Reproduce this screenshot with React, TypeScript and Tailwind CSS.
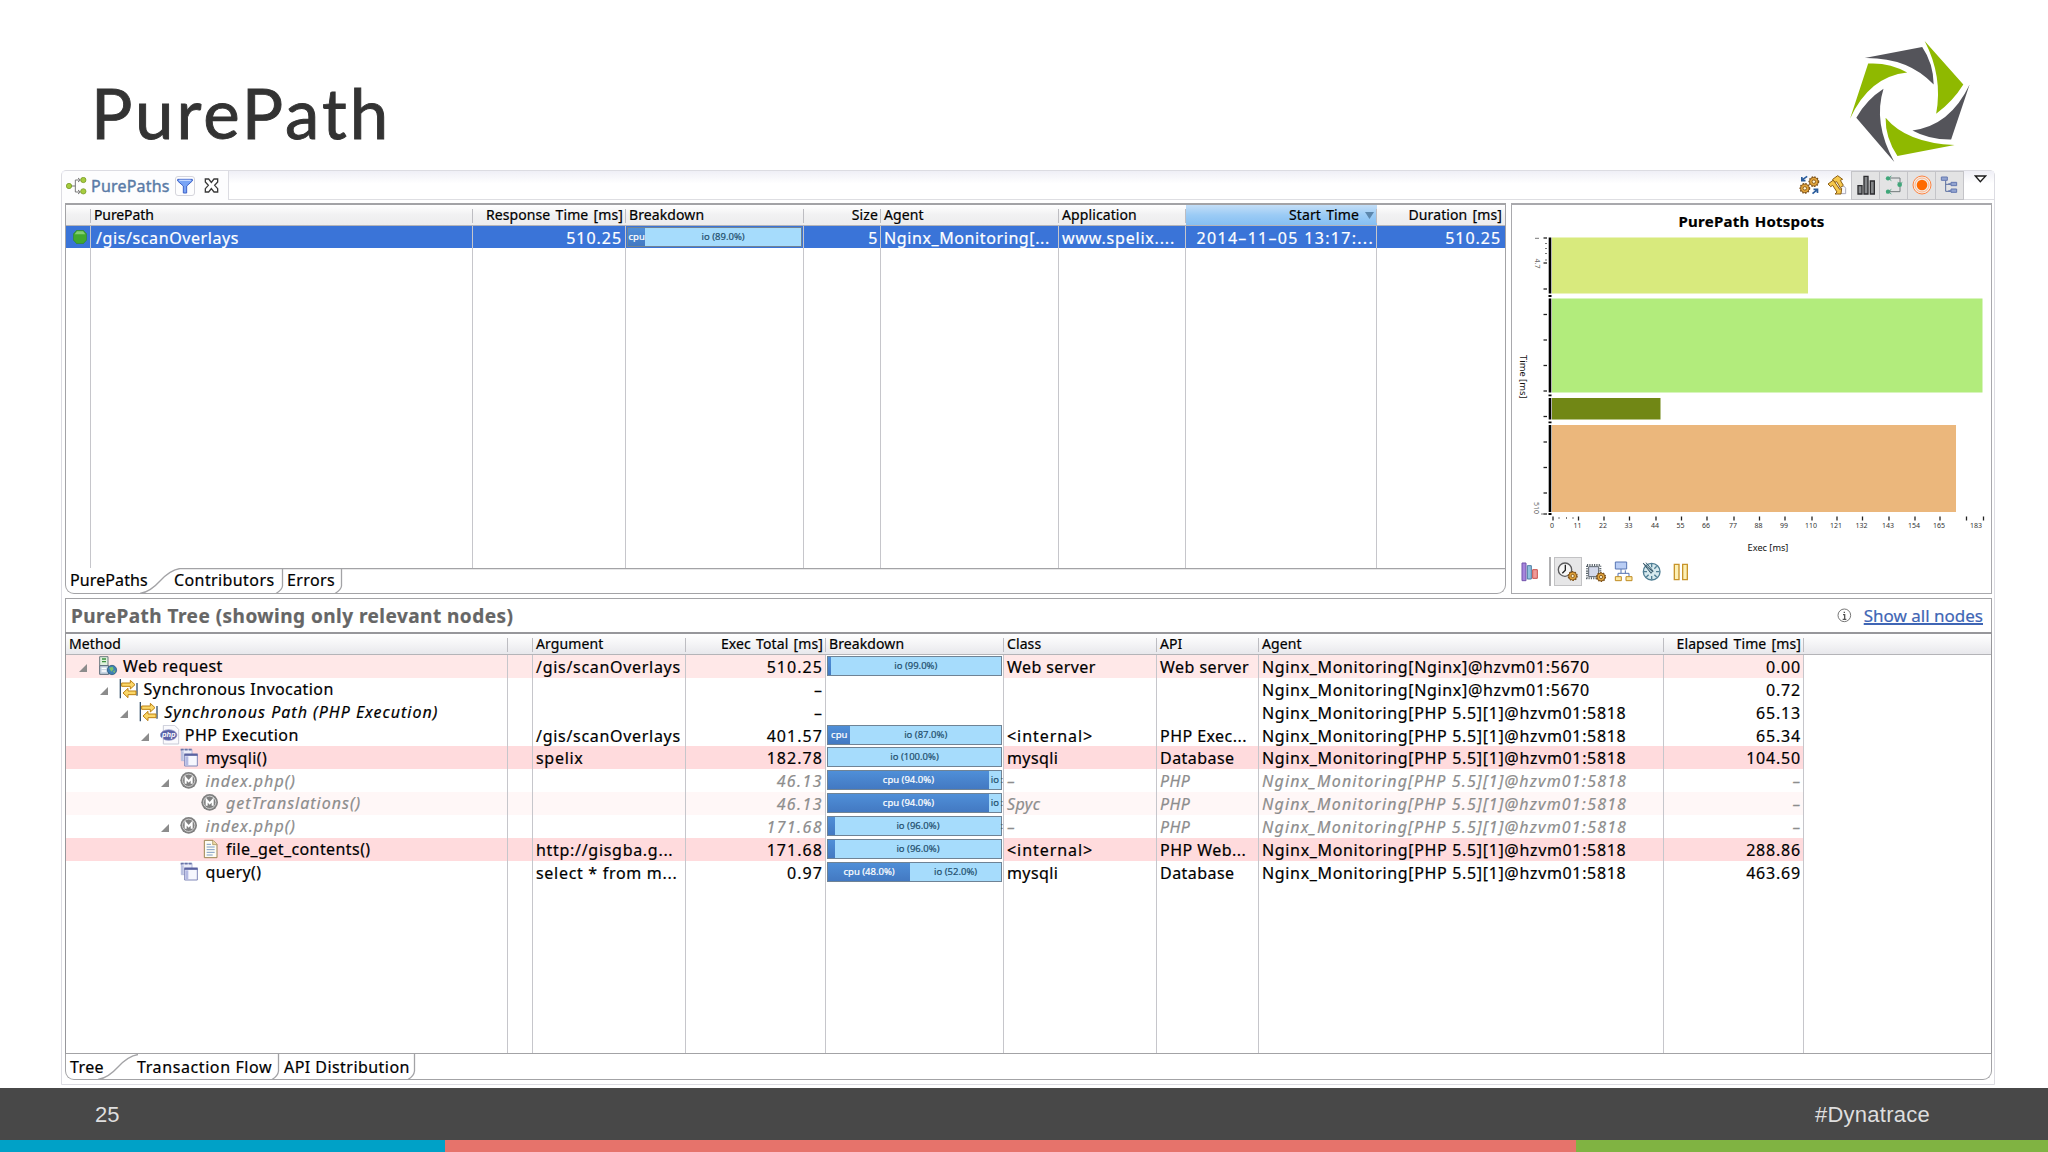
import React from 'react';
import clsx from 'clsx';

type IconName = 'server' | 'sync' | 'php' | 'windows' | 'method' | 'file';

interface Split {
  cpu: number;
  cpuLabel?: string;
  ioLabel?: string;
  overflow?: boolean;
}

interface TreeRow {
  level: number;
  icon: IconName;
  method: string;
  expandable?: boolean;
  italic?: boolean;
  muted?: boolean;
  bg?: string;
  argument?: string;
  exec: string;
  split?: Split;
  cls?: string;
  api?: string;
  agent: string;
  elapsed: string;
}

const NGINX = 'Nginx_Monitoring[Nginx]@hzvm01:5670';
const PHP = 'Nginx_Monitoring[PHP 5.5][1]@hzvm01:5818';

const rows: TreeRow[] = [
  { level: 0, icon: 'server', method: 'Web request', expandable: true, bg: 'bg-[#ffe8e8]', argument: '/gis/scanOverlays', exec: '510.25', split: { cpu: 1.5, ioLabel: 'io (99.0%)' }, cls: 'Web server', api: 'Web server', agent: NGINX, elapsed: '0.00' },
  { level: 1, icon: 'sync', method: 'Synchronous Invocation', expandable: true, exec: '–', agent: NGINX, elapsed: '0.72' },
  { level: 2, icon: 'sync', method: 'Synchronous Path (PHP Execution)', expandable: true, italic: true, exec: '–', agent: PHP, elapsed: '65.13' },
  { level: 3, icon: 'php', method: 'PHP Execution', expandable: true, argument: '/gis/scanOverlays', exec: '401.57', split: { cpu: 13, cpuLabel: 'cpu', ioLabel: 'io (87.0%)' }, cls: '<internal>', api: 'PHP Exec...', agent: PHP, elapsed: '65.34' },
  { level: 4, icon: 'windows', method: 'mysqli()', bg: 'bg-[#ffdbdd]', argument: 'spelix', exec: '182.78', split: { cpu: 0, ioLabel: 'io (100.0%)' }, cls: 'mysqli', api: 'Database', agent: PHP, elapsed: '104.50' },
  { level: 4, icon: 'method', method: 'index.php()', expandable: true, muted: true, exec: '46.13', split: { cpu: 93, cpuLabel: 'cpu (94.0%)', ioLabel: 'io', overflow: true }, cls: '–', api: 'PHP', agent: PHP, elapsed: '–' },
  { level: 5, icon: 'method', method: 'getTranslations()', muted: true, bg: 'bg-[#fff7f7]', exec: '46.13', split: { cpu: 93, cpuLabel: 'cpu (94.0%)', ioLabel: 'io', overflow: true }, cls: 'Spyc', api: 'PHP', agent: PHP, elapsed: '–' },
  { level: 4, icon: 'method', method: 'index.php()', expandable: true, muted: true, exec: '171.68', split: { cpu: 4, ioLabel: 'io (96.0%)', overflow: true }, cls: '–', api: 'PHP', agent: PHP, elapsed: '–' },
  { level: 5, icon: 'file', method: 'file_get_contents()', bg: 'bg-[#ffdbdd]', argument: 'http://gisgba.g...', exec: '171.68', split: { cpu: 4, ioLabel: 'io (96.0%)' }, cls: '<internal>', api: 'PHP Web...', agent: PHP, elapsed: '288.86' },
  { level: 4, icon: 'windows', method: 'query()', argument: 'select * from m...', exec: '0.97', split: { cpu: 47.5, cpuLabel: 'cpu (48.0%)', ioLabel: 'io (52.0%)' }, cls: 'mysqli', api: 'Database', agent: PHP, elapsed: '463.69' },
];

const TOP_COLS = 'grid grid-cols-[25px_382px_153px_178px_77px_178px_127px_191px_1fr]';
const TREE_COLS = 'grid grid-cols-[442px_25px_153px_140px_178px_153px_102px_405px_140px_1fr]';

const Logo = () => (
  <svg className="h-[123px] w-[122px]" viewBox="1000 60 350 370" preserveAspectRatio="none">
    <g fill="#8fb900">
      <path d="M1217 63L1328 194Q1298 245 1250 282Q1270 170 1217 63Z" />
      <path d="M1055 131Q1115 127 1167 158Q1058 170 1003 297Z" />
      <path d="M1105 294Q1165 370 1303 376L1139 409Q1104 355 1105 294Z" />
    </g>
    <g fill="#54545a">
      <path d="M1045 114L1210 81Q1242 130 1243 194Q1170 112 1045 114Z" />
      <path d="M1346 194L1293 359Q1230 360 1182 332Q1290 318 1346 194Z" />
      <path d="M1099 207Q1068 310 1130 427L1021 294Q1050 240 1099 207Z" />
    </g>
  </svg>
);

const Gear = ({ x, y, r }: { x: number; y: number; r: number }) => (
  <g>
    <circle cx={x} cy={y} r={r} fill="#e0a23a" stroke="#7c4f16" strokeWidth="2.5" />
    <circle cx={x} cy={y} r={r + 1.5} fill="none" stroke="#7c4f16" strokeWidth="3.5" strokeDasharray="4.5 4" />
    <circle cx={x} cy={y} r={r * 0.4} fill="#fff4d0" stroke="#7c4f16" strokeWidth="2.5" />
  </g>
);

const TreeIcon = ({ name }: { name: IconName }) => (
  <svg className="h-5 w-5 shrink-0" viewBox="0 0 60 60">
    {name === 'server' && (
      <>
        <path d="M5 2h25v27H5z" fill="#dff0dc" stroke="#6d7a80" strokeWidth="3" />
        <path d="M5 29h27v26H5z" fill="#c9d6e4" stroke="#5b6a78" strokeWidth="3" />
        <path d="M12 9h12M12 17h12" stroke="#3d9140" strokeWidth="4" />
        <path d="M11 37h14M11 45h14" stroke="#fff" strokeWidth="4" />
        <circle cx="42" cy="42" r="14" fill="#3f7fb5" stroke="#234d6e" strokeWidth="2" />
        <path d="M33 35l11-3 3 8-7 7zM45 46l7-3-3 9z" fill="#7cc36a" />
      </>
    )}
    {name === 'sync' && (
      <>
        <path d="M4 0v58M54 12v38" stroke="#34506c" strokeWidth="4" />
        <path d="M8 12h26V4l14 13-14 13v-8H8z" fill="#fbd768" stroke="#bd8213" strokeWidth="3" />
        <path d="M51 36H27v-8L12 42l15 14v-9h24z" fill="#fbd768" stroke="#bd8213" strokeWidth="3" />
      </>
    )}
    {name === 'php' && (
      <>
        <path d="M10 1h34l12 12v44H10z" fill="#fafafd" stroke="#c8cad6" strokeWidth="3" />
        <ellipse cx="26" cy="30" rx="25" ry="16" fill="#5a62a8" stroke="#9297c5" strokeWidth="2" />
        <text x="26" y="37" textAnchor="middle" fill="#fff" fontSize="22" fontWeight="bold" fontStyle="italic" fontFamily="Liberation Sans, sans-serif">php</text>
      </>
    )}
    {name === 'windows' && (
      <>
        <path d="M4 4h32v34H4z" fill="#eceef9" stroke="#b3badb" strokeWidth="3" />
        <path d="M2 5h34" stroke="#6874a8" strokeWidth="5" strokeDasharray="9 3" />
        <path d="M5 10h6v26H5z" fill="#b9c0e0" />
        <path d="M14 20h38v34H14z" fill="#f6f7fe" stroke="#8087b8" strokeWidth="3" />
        <path d="M13 20h40" stroke="#5a62a0" strokeWidth="7" />
        <path d="M16 25h9v28h-9z" fill="#b3b9e2" />
      </>
    )}
    {name === 'method' && (
      <>
        <circle cx="26" cy="28" r="25" fill="#808080" />
        <circle cx="26" cy="28" r="18.500" fill="none" stroke="#dcdcdc" strokeWidth="2.5" />
        <path d="M17 38V21l9 10 9-10v17" fill="none" stroke="#fff" strokeWidth="6" />
      </>
    )}
    {name === 'file' && (
      <>
        <path d="M10 4h26l12 12v40H10z" fill="#fdfdf5" stroke="#9c8450" strokeWidth="3" />
        <path d="M35 4v13h13" fill="#ecd9a2" stroke="#9c8450" strokeWidth="2" />
        <path d="M17 16h13M17 24h24M17 32h24M17 40h24M17 48h18" stroke="#7d9cc4" strokeWidth="3" />
      </>
    )}
  </svg>
);

const Breakdown = ({ split }: { split: Split }) => (
  <div className="relative -ml-[2px] flex h-[20px] w-[175px] border border-[#6f8395] text-[9.5px] leading-[18px] not-italic tracking-[0px]">
    <div className="overflow-hidden bg-gradient-to-b from-[#4f8fd8] to-[#4379c2] text-center text-white" style={{ width: `${split.cpu}%` }}>
      {split.cpuLabel}
    </div>
    <div className="flex-1 bg-[#a6dcfc] text-center text-[#24506e]">{split.ioLabel}</div>
    {split.overflow && <span className="absolute top-0 -right-[2px] text-[#555]">:</span>}
  </div>
);

const HeadCell = ({ children, right, last, className }: { children?: React.ReactNode; right?: boolean; last?: boolean; className?: string }) => (
  <div className={clsx('relative whitespace-nowrap px-[3px]', right && 'text-right [word-spacing:1.5px]', className)}>
    {children}
    {!last && <span className="absolute top-[4px] right-0 h-[14px] w-px bg-[#bdbdc2]" />}
  </div>
);

const Cell = ({ children, right, className }: { children?: React.ReactNode; right?: boolean; className?: string }) => (
  <div className={clsx('overflow-hidden border-r border-[#c6c6cb] whitespace-nowrap pl-[3px]', right && 'pr-[2px] text-right', className)}>
    {children}
  </div>
);

const ViewToolbar = () => (
  <div className="flex h-[28px] items-center">
    <svg className="mr-[7px] h-5 w-[21px]" viewBox="0 0 62 60">
      <Gear x={17} y={40} r={13} />
      <Gear x={44} y={20} r={13} />
      <path d="M24 4L10 14M8 6v11h11M40 56l12-10M55 54V43H43" fill="none" stroke="#2a5c9c" strokeWidth="5" />
    </svg>
    <svg className="mr-1 h-5 w-5" viewBox="0 0 60 60">
      <path d="M36 34h16l4 6v16H36z" fill="#f8f8fc" stroke="#aab" strokeWidth="3" />
      <path d="M17 13L32 2l15 11-7 3 9 15-9 7-11-18-7 3z" fill="#f6c84c" stroke="#8a5d14" strokeWidth="3" />
      <path d="M3 27l15-11 3 2 17 25 6-3-2 17H24l6-6-13-20-6 4z" fill="#f6c84c" stroke="#8a5d14" strokeWidth="3" />
    </svg>
    <div className="flex divide-x divide-[#c4c4c8] border border-[#c4c4c8] bg-[#e3e3e4]">
      <span className="flex h-[27px] w-[28px] items-center justify-center">
        <svg className="h-5 w-5" viewBox="0 0 60 60">
          <path d="M6 32h12v25H6zM24 4h12v53H24zM43 18h12v39H43z" fill="#85878a" stroke="#2d2d30" strokeWidth="4" />
        </svg>
      </span>
      <span className="flex h-[27px] w-[28px] items-center justify-center">
        <svg className="h-5 w-5" viewBox="0 0 60 60">
          <path d="M12 9h36v16M48 34v16H14" fill="none" stroke="#70797a" strokeWidth="3" />
          <g fill="#3fa879">
            <circle cx="12" cy="10" r="6.5" />
            <circle cx="47" cy="29" r="7" />
            <circle cx="12" cy="50" r="6.5" />
          </g>
          <path d="M22 3l-8 7 8 7M22 43l-8 7 8 7M41 22l7 6 7-6" fill="none" stroke="#4b9f80" strokeWidth="3" />
        </svg>
      </span>
      <span className="flex h-[27px] w-[28px] items-center justify-center">
        <svg className="h-5 w-5" viewBox="0 0 60 60">
          <circle cx="30" cy="30" r="27" fill="#f3ece6" stroke="#ff8340" strokeWidth="3" />
          <circle cx="30" cy="30" r="21" fill="none" stroke="#ff9a60" strokeWidth="2" />
          <circle cx="30" cy="30" r="16" fill="#ff6a00" />
        </svg>
      </span>
      <span className="flex h-[27px] w-[27px] items-center justify-center">
        <svg className="h-5 w-5" viewBox="0 0 60 60">
          <path d="M17 16v33h14M17 28h14" fill="none" stroke="#5b6f9e" strokeWidth="3" />
          <path d="M4 6h18v10H4zM33 22h17v10H33zM33 42h17v10H33z" fill="#93a4d0" stroke="#6478b0" strokeWidth="3" />
          <path d="M25 27h8M25 48h8" stroke="#6478b0" strokeWidth="4" />
        </svg>
      </span>
    </div>
    <svg className="mt-[-12px] mr-[7px] ml-[10px] h-[8px] w-[13px]" viewBox="0 0 39 24">
      <path d="M4 3h31L19 20z" fill="#fff" stroke="#1c1c1c" strokeWidth="4" />
    </svg>
  </div>
);

const xTicks = [
  [0, '0'], [25.5, '11'], [51, '22'], [76.5, '33'], [103, '44'], [128.5, '55'], [154, '66'], [181, '77'], [206.5, '88'],
  [232, '99'], [259, '110'], [284, '121'], [309.5, '132'], [336, '143'], [362, '154'], [387, '165'], [413.5, ''], [430.5, ''],
] as const;

const yTicks = [238, 263, 289, 314.5, 340, 365.5, 391, 416.5, 442, 467.5, 493, 514];

const HotspotChart = () => (
  <svg className="h-[325px] w-[478px]" viewBox="1512 230 478 325" fontFamily="Noto Sans, sans-serif">
    <rect x="1552" y="237.5" width="256" height="56" fill="#d8ea7d" />
    <rect x="1552" y="298.5" width="430.5" height="94" fill="#b2ec7c" />
    <rect x="1552" y="398" width="108.5" height="21.5" fill="#718715" />
    <rect x="1552" y="425" width="404" height="87" fill="#ebb77c" />
    <path d="M1550 237.5v56M1550 298.5v94M1550 398v21.5M1550 425v87" stroke="#000" strokeWidth="2.6" />
    <path d="M1548.5 296h3M1548.5 395.3h3M1548.5 422.3h3M1548.5 514h3" stroke="#000" strokeWidth="1.8" />
    {yTicks.map((y) => (
      <path key={y} d={`M1543.5 ${y}h3.5`} stroke="#222" strokeWidth="1.3" />
    ))}
    <path d="M1545 243.5h2M1545 248.5h2M1545 253.5h2M1545 260h2M1535 238.3h4M1541 514h3" stroke="#777" />
    {xTicks.map(([x, label]) => (
      <g key={x}>
        <path d={`M${1553 + x} 516.5v4`} stroke="#222" strokeWidth="1.3" />
        <text x={1552 + x} y="528" fontSize="7" fill="#333" textAnchor="middle">{label}</text>
      </g>
    ))}
    <path d="M1559 517v2M1566.5 517v2M1573 517v2" stroke="#777" />
    <text x="1976" y="528" fontSize="7" fill="#333" textAnchor="middle">183</text>
    <text x="1768" y="550.5" fontSize="9.2" fill="#111" textAnchor="middle">Exec [ms]</text>
    <text transform="translate(1520 355) rotate(90)" fontSize="9.4" fill="#111">Time [ms]</text>
    <text transform="translate(1535 258.5) rotate(90)" fontSize="7" fill="#666">4.7</text>
    <text transform="translate(1534 502) rotate(90)" fontSize="7" fill="#666">510</text>
  </svg>
);

const ChartToolbar = () => (
  <div className="mt-[2px] ml-[9px] flex h-[29px] items-center">
    <svg className="h-[20px] w-[18px]" viewBox="0 0 54 60">
      <path d="M3 3h12v53H3z" fill="#a585dc" stroke="#7253ac" strokeWidth="3" />
      <path d="M19 11h12v40H19z" fill="#8fc0de" stroke="#4d7ca4" strokeWidth="3" />
      <path d="M35 23h14v26H35z" fill="#f09a98" stroke="#c8524e" strokeWidth="3" />
    </svg>
    <span className="mr-[3px] ml-[10px] h-[29px] w-[2px] bg-[#b0b0b2]" />
    <span className="flex h-[29px] w-[28px] items-center justify-center border border-[#c2c2c4] bg-[#e6e6e7]">
      <svg className="h-[20px] w-[22px]" viewBox="0 0 64 60">
        <circle cx="23" cy="23" r="20" fill="#f6f6f6" stroke="#5a5a5c" strokeWidth="4" />
        <path d="M24 8v17l-9 9" fill="none" stroke="#222" strokeWidth="4" />
        <Gear x={46} y={42} r={12} />
      </svg>
    </span>
    <svg className="mt-[3px] ml-[3px] h-[20px] w-[22px]" viewBox="0 0 64 60">
      <path d="M5 6h40v40H5z" fill="none" stroke="#59636b" strokeWidth="6" strokeDasharray="3.5 3.5" />
      <path d="M10 11h30v30H10z" fill="#d3d9ec" stroke="#59636b" strokeWidth="3" />
      <Gear x={47} y={42} r={12} />
    </svg>
    <svg className="ml-[7px] h-[21px] w-[19px]" viewBox="0 0 57 63">
      <path d="M4 3h34v21H4z" fill="#b9cdf4" stroke="#5775b4" strokeWidth="3" />
      <path d="M21 24v13M12 48V37h33v11M34 28v9" fill="none" stroke="#5775b4" strokeWidth="3" />
      <path d="M4 47h18v12H4zM36 47h18v12H36z" fill="#fde9a0" stroke="#bf8b25" strokeWidth="3" />
    </svg>
    <svg className="ml-[9px] h-[19px] w-[19px]" viewBox="0 0 57 57">
      <circle cx="29" cy="29" r="25" fill="#d6e9ee" stroke="#4f7e94" strokeWidth="4" />
      <path d="M29 6v10M29 42v10M42 29h10M6 29h9M44 13l-7 7M44 45l-7-7M13 45l7-7" stroke="#4f7e94" strokeWidth="4" />
      <path d="M4 4l28 24-5 6zM12 2l22 26" fill="#9dbbc6" stroke="#35576a" strokeWidth="3" />
    </svg>
    <svg className="ml-[12px] h-[18px] w-[16px]" viewBox="0 0 48 54">
      <path d="M4 4h14v46H4zM29 4h14v46H29z" fill="#fdf0b4" stroke="#c8942a" strokeWidth="4" />
    </svg>
  </div>
);

const App: React.FC = () => {
  return (
    <div className="flex h-[1152px] w-[2048px] flex-col overflow-hidden bg-white font-['Noto_Sans',sans-serif] text-black">
      <header className="flex h-[170px] shrink-0 justify-between pr-[77px] pl-[91px]">
        <h1 className="pt-[71px] font-['Lato',sans-serif] text-[69px] leading-[84px] tracking-[3px] text-[#333] [-webkit-text-stroke:0.9px_#333]">PurePath</h1>
        <div className="pt-[40px]">
          <Logo />
        </div>
      </header>

      <div className="ml-[61px] flex h-[915px] w-[1934px] shrink-0 flex-col rounded-t-[5px] border border-[#dcdce2] [-webkit-text-stroke:0.2px]">
        {/* View title bar */}
        <div className="flex h-[29px] shrink-0 justify-between border-b border-[#dedee2] bg-gradient-to-b from-[#efeff6] to-white to-45%">
          <div className="-mb-px flex w-[167px] items-center rounded-tl-[5px] border-r border-[#dcdce2] bg-[#fdfdfe] pl-[4px]">
            <svg className="h-[18px] w-[21px]" viewBox="0 0 63 54">
              <path d="M15 27h13M42 9H28v36h14" fill="none" stroke="#777" strokeWidth="3" />
              <path d="M36 3l7 6-7 6M36 39l7 6-7 6" fill="none" stroke="#777" strokeWidth="3" />
              <g fill="#a6cc3f" stroke="#6d8f1d" strokeWidth="2">
                <circle cx="9" cy="27" r="8" />
                <circle cx="52" cy="9" r="8" />
                <circle cx="52" cy="43" r="8" />
              </g>
            </svg>
            <span className="ml-[4px] w-[78px] text-[16px] leading-5 tracking-[0.2px] whitespace-nowrap text-[#5a7ba6] [-webkit-text-stroke:0.4px]">PurePaths</span>
            <span className="ml-[6px] flex h-5 w-5 items-center justify-center rounded-[3px] border border-[#d5d5dc]">
              <svg className="h-4 w-4" viewBox="0 0 48 48">
                <path d="M2 4h44v5L29 24v21H19V24L2 9z" fill="#79a4f5" stroke="#3e62c8" strokeWidth="3" />
                <path d="M7 7h34" stroke="#c4d8ff" strokeWidth="4" />
              </svg>
            </span>
            <svg className="ml-[9px] h-[15px] w-[15px]" viewBox="0 0 45 45">
              <path d="M4 3h10l8 10 8-10h11v9l-9 10 9 10v10H30l-8-10-8 10H4V32l9-10-9-10z" fill="#fff" stroke="#3a3a3a" strokeWidth="4" />
            </svg>
          </div>
          <ViewToolbar />
        </div>

        {/* Upper half: PurePath list and hotspots */}
        <div className="mt-[3px] ml-[3px] flex h-[391px] shrink-0">
          <div className="flex w-[1441px] flex-col">
            <div className="flex h-[365px] flex-col border-x border-t-2 border-[#a3a3a6]">
              <div className={clsx(TOP_COLS, 'h-[21px] border-b border-[#b4b4b8] bg-gradient-to-b from-white via-[#f1f1f2] to-[#ededee] text-[14px] leading-[19px] tracking-[0.1px]')}>
                <HeadCell />
                <HeadCell className="tracking-[-0.1px]">PurePath</HeadCell>
                <HeadCell right>Response Time [ms]</HeadCell>
                <HeadCell>Breakdown</HeadCell>
                <HeadCell right>Size</HeadCell>
                <HeadCell>Agent</HeadCell>
                <HeadCell>Application</HeadCell>
                <HeadCell right className="bg-gradient-to-b from-[#c3def7] via-[#9bcbf5] to-[#86bff2]">
                  Start Time
                  <svg className="mb-[1px] ml-[6px] inline h-[7px] w-[9px]" viewBox="0 0 9 7"><path d="M0 0h9L4.5 7z" fill="#5c87ad" /></svg>
                </HeadCell>
                <HeadCell right last>Duration [ms]</HeadCell>
              </div>
              <div className={clsx(TOP_COLS, 'h-[22px] bg-[#3a74d8] text-[16px] leading-[24px] tracking-[0.6px] text-white')}>
                <Cell>
                  <svg className="mt-[4px] ml-[4px] h-[14px] w-[14px]" viewBox="0 0 42 42">
                    <path d="M11 1h20l10 11v18L31 41H11L1 30V12z" fill="#42a82e" stroke="#2e8434" strokeWidth="2" />
                    <path d="M12 4h18l7 9H5z" fill="#82cd72" />
                  </svg>
                </Cell>
                <Cell className="pl-[5px]">/gis/scanOverlays</Cell>
                <Cell right className="pr-[3px] tracking-[0.95px]">510.25</Cell>
                <Cell className="pt-px">
                  <Breakdown split={{ cpu: 10, cpuLabel: 'cpu', ioLabel: 'io (89.0%)' }} />
                </Cell>
                <Cell right>5</Cell>
                <Cell>Nginx_Monitoring[...</Cell>
                <Cell className="tracking-[0.8px]">www.spelix....</Cell>
                <Cell right className="tracking-[1.3px]">2014–11–05 13:17:...</Cell>
                <Cell right className="border-r-0 pr-[4px] tracking-[0.95px]">510.25</Cell>
              </div>
              <div className={clsx(TOP_COLS, 'flex-1')}>
                {Array.from({ length: 8 }, (_, i) => <Cell key={i} />)}
              </div>
            </div>
            <div className="relative flex h-[26px] rounded-b-[9px] border-x border-b border-[#a3a3a6] text-[16px] leading-[25px]">
              <svg className="absolute top-0 left-0 h-[26px] w-[1439px]" fill="none" stroke="#a3a3a6">
                <path d="M74 25.500Q84 24 94 13T114 .5H1439M216.500 .5V18Q216 22 210 25.500M275.500 .5V18Q275 22 269 25.500" strokeWidth="1.3" />
              </svg>
              <span className="w-[104px] pl-[4px] tracking-[0.1px]">PurePaths</span>
              <span className="w-[113px] pl-[4px] tracking-[0.4px]">Contributors</span>
              <span className="pl-[4px] tracking-[0.4px]">Errors</span>
            </div>
          </div>

          <div className="ml-[5px] flex w-[481px] flex-col border border-t-2 border-[#a9a9ad] bg-white">
            <h2 className="h-[25px] text-center text-[15px] leading-[32px] font-bold tracking-[0.25px] [word-spacing:1px]">PurePath Hotspots</h2>
            <HotspotChart />
            <ChartToolbar />
          </div>
        </div>

        {/* Lower half: PurePath tree */}
        <div className="mt-[4px] ml-[3px] flex h-[483px] w-[1927px] shrink-0 flex-col">
          <div className="flex h-[34px] shrink-0 items-center justify-between border border-b-0 border-[#a3a3a6] pr-[8px] pl-[5px]">
            <h2 className="text-[19px] leading-[30px] font-bold tracking-[0.47px] text-[#666]">PurePath Tree (showing only relevant nodes)</h2>
            <div className="flex items-center">
              <svg className="mr-[12px] h-[15px] w-[15px]" viewBox="0 0 45 45">
                <circle cx="22" cy="22" r="19" fill="#fff" stroke="#777" strokeWidth="3" />
                <path d="M22 11v4M18 20h5v13M17 34h11" fill="none" stroke="#555" strokeWidth="4" />
              </svg>
              <a className="text-[17px] leading-[24px] text-[#3f66b5] underline decoration-[1.5px]">Show all nodes</a>
            </div>
          </div>
          <div className="flex h-[422px] flex-col border-x border-t-2 border-b border-[#97979b] border-b-[#a3a3a6]">
            <div className={clsx(TREE_COLS, 'h-[21px] shrink-0 border-b border-[#b4b4b8] bg-gradient-to-b from-white via-[#f4f4f6] to-[#e8e8ec] text-[14px] leading-[19px] tracking-[0.1px]')}>
              <HeadCell>Method</HeadCell>
              <HeadCell />
              <HeadCell>Argument</HeadCell>
              <HeadCell right>Exec Total [ms]</HeadCell>
              <HeadCell>Breakdown</HeadCell>
              <HeadCell>Class</HeadCell>
              <HeadCell>API</HeadCell>
              <HeadCell>Agent</HeadCell>
              <HeadCell right>Elapsed Time [ms]</HeadCell>
              <HeadCell last />
            </div>
            {rows.map((row, i) => (
              <div key={i} className={clsx(TREE_COLS, 'h-[22.85px] shrink-0 text-[16px] leading-[25px]', row.muted && 'text-[#8d8d8d] italic')}>
                <Cell className={clsx('flex items-center', row.bg)}>
                  <span className="shrink-0" style={{ width: 10 + row.level * 20.6 }} />
                  <svg className="mt-[4px] mr-[11px] h-2 w-2 shrink-0" viewBox="0 0 8 8">
                    {row.expandable && <path d="M8 0v8H0z" fill="#8c8c8c" />}
                  </svg>
                  <TreeIcon name={row.icon} />
                  <span className={clsx('ml-[5px] leading-[22px]', row.muted || row.italic ? 'tracking-[1px] italic' : 'tracking-[0.42px]')}>{row.method}</span>
                </Cell>
                <Cell className={row.bg} />
                <Cell className={clsx('tracking-[0.7px]', row.bg)}>{row.argument}</Cell>
                <Cell right className={clsx(row.muted ? 'tracking-[1.4px]' : 'tracking-[1.05px]', row.bg)}>{row.exec}</Cell>
                <Cell className="pt-[1px]">{row.split && <Breakdown split={row.split} />}</Cell>
                <Cell className={clsx(row.cls?.startsWith('<') ? 'tracking-[0.95px]' : 'tracking-[0.4px]', row.bg)}>{row.cls}</Cell>
                <Cell className={clsx('tracking-[0.45px]', row.bg)}>{row.api}</Cell>
                <Cell className={clsx(row.muted ? 'tracking-[1.18px]' : 'tracking-[0.66px]', row.bg)}>{row.agent}</Cell>
                <Cell right className={clsx('tracking-[0.8px]', row.bg)}>{row.elapsed}</Cell>
              </div>
            ))}
            <div className={clsx(TREE_COLS, 'flex-1')}>
              {Array.from({ length: 9 }, (_, i) => <Cell key={i} />)}
            </div>
          </div>
          <div className="relative flex h-[26px] rounded-b-[9px] border-x border-b border-[#a3a3a6] text-[16px] leading-[26px]">
            <svg className="absolute top-0 left-0 h-[26px] w-[400px]" fill="none" stroke="#a3a3a6">
              <path d="M32 25.500Q42 24 52 13T72 .5M212.500 0V17Q212 22 206 25.500M348.500 0V17Q348 22 342 25.500" strokeWidth="1.3" />
            </svg>
            <span className="w-[67px] pl-[4px] tracking-[0.4px]">Tree</span>
            <span className="w-[147px] pl-[4px] tracking-[0.6px]">Transaction Flow</span>
            <span className="pl-[4px] tracking-[0.45px]">API Distribution</span>
          </div>
        </div>
      </div>

      <footer className="mt-[3px] flex h-[52px] shrink-0 items-center justify-between bg-[#484848] pt-[2px] pr-[118px] pl-[95px] font-['Liberation_Sans',sans-serif] text-[22px] leading-[50px] text-[#dedede]">
        <span>25</span>
        <span className="tracking-[0.25px]">#Dynatrace</span>
      </footer>
      <div className="flex h-[12px] shrink-0">
        <div className="w-[445px] bg-[#00a1c7]" />
        <div className="w-[1131px] bg-[#e6736b]" />
        <div className="flex-1 bg-[#80b342]" />
      </div>
    </div>
  );
};

export default App;
